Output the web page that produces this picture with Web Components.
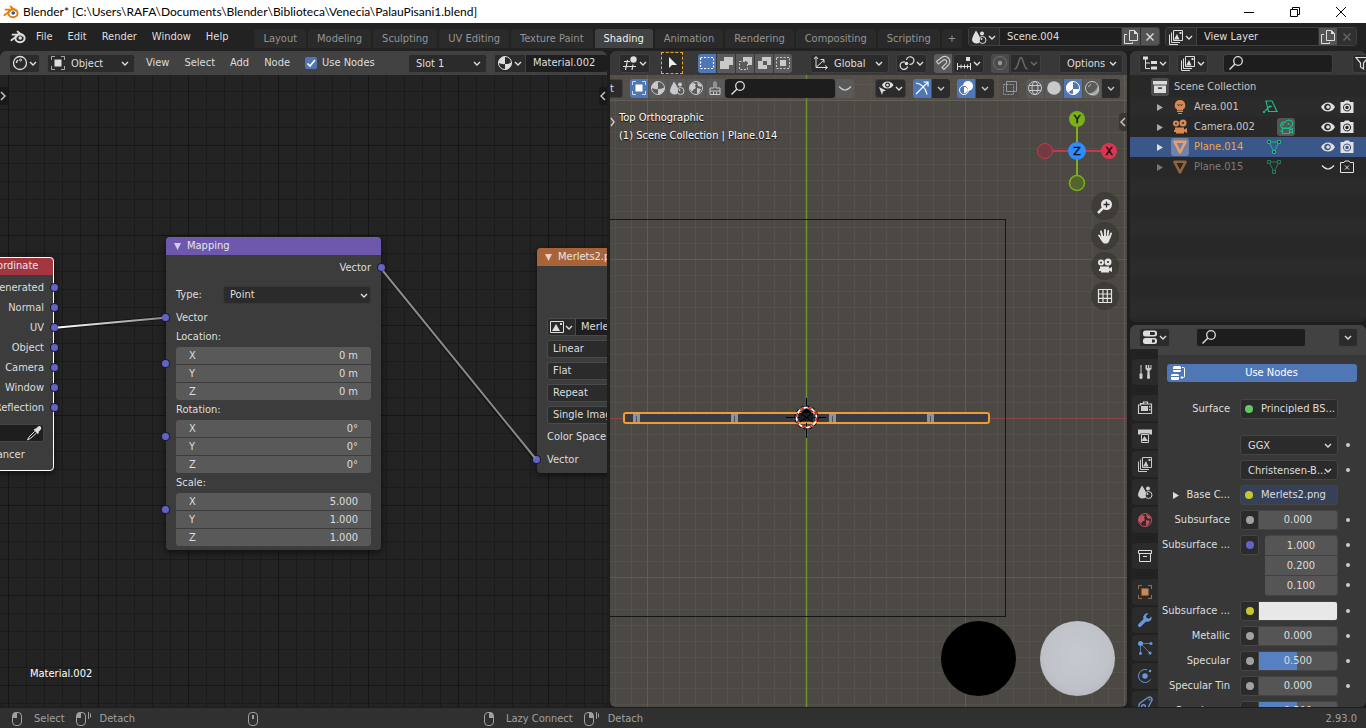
<!DOCTYPE html>
<html lang="en">
<head>
<meta charset="utf-8">
<title>Blender* PalauPisani1.blend</title>
<style>
    * {
        box-sizing: border-box;
    }

    body {
        margin: 0;
        height: 100vh;
        display: flex;
        flex-direction: column;
        overflow: hidden;
        background: #1e1e1e;
        color: #dedede;
        font: 11px/18px "DejaVu Sans Condensed", "DejaVu Sans", sans-serif;
        --field: #2b2b2b;
        --line: #404040;
        --blue: #5077b5;
    }

    main {
        flex: 1;
        min-height: 0;
        display: grid;
        grid-template-columns: minmax(0, 607fr) minmax(0, 517fr) minmax(0, 236fr);
        grid-template-rows: minmax(0, 1fr);
        gap: 3px;
        padding-bottom: 1px;
    }

    .side {
        display: grid;
        grid-template-rows: minmax(0, 271fr) minmax(0, 382fr);
        gap: 3px;
        min-height: 0;
    }

    .left { margin-right: auto; }
    .m4 { margin-left: 4px; }
    .m8 { margin-left: 8px; }
    .m11 { margin-left: 11px; }
</style>
</head>
<body>

<bl-titlebar>Blender* [C:\Users\RAFA\Documents\Blender\Biblioteca\Venecia\PalauPisani1.blend]</bl-titlebar>

<bl-topbar>
    <bl-menu slot="menu">File</bl-menu>
    <bl-menu slot="menu">Edit</bl-menu>
    <bl-menu slot="menu">Render</bl-menu>
    <bl-menu slot="menu">Window</bl-menu>
    <bl-menu slot="menu">Help</bl-menu>
    <bl-tab>Layout</bl-tab>
    <bl-tab>Modeling</bl-tab>
    <bl-tab>Sculpting</bl-tab>
    <bl-tab>UV Editing</bl-tab>
    <bl-tab>Texture Paint</bl-tab>
    <bl-tab active>Shading</bl-tab>
    <bl-tab>Animation</bl-tab>
    <bl-tab>Rendering</bl-tab>
    <bl-tab>Compositing</bl-tab>
    <bl-tab>Scripting</bl-tab>
    <bl-tab narrow>+</bl-tab>
    <bl-datablock slot="data" icon="scene" value="Scene.004" label="Scene"></bl-datablock>
    <bl-datablock slot="data" icon="layers" value="View Layer" label="View layer" last></bl-datablock>
</bl-topbar>

<main>
    <bl-area style="--head: #424242">
        <bl-drop slot="header" icon="shader" label="Editor type"></bl-drop>
        <bl-select slot="header" icon="object" value="Object" label="Shader type" style="width: 88px"></bl-select>
        <bl-menu slot="header" class="m4">View</bl-menu>
        <bl-menu slot="header" class="m8">Select</bl-menu>
        <bl-menu slot="header" class="m8">Add</bl-menu>
        <bl-menu slot="header" class="m8">Node</bl-menu>
        <bl-check slot="header" class="m8 left">Use Nodes</bl-check>
        <bl-select slot="header" value="Slot 1" label="Slot" style="width: 79px"></bl-select>
        <bl-datablock slot="header" icon="material" value="Material.002" label="Material" plain style="width: 114px; margin-right: -9px"></bl-datablock>
        <bl-node-canvas>
            <bl-node heading="Texture Coordinate" color="#a3363f" selected style="left: -76px; top: 182px; width: 130px">
                <bl-socket out>Generated</bl-socket>
                <bl-socket out>Normal</bl-socket>
                <bl-socket out>UV</bl-socket>
                <bl-socket out>Object</bl-socket>
                <bl-socket out>Camera</bl-socket>
                <bl-socket out>Window</bl-socket>
                <bl-socket out>Reflection</bl-socket>
                <bl-picker></bl-picker>
                <bl-option>From Instancer</bl-option>
            </bl-node>
            <bl-node heading="Mapping" color="#6e58ad" style="left: 166px; top: 162px; width: 215px">
                <bl-socket out>Vector</bl-socket>
                <bl-labeled-select label="Type:" value="Point"></bl-labeled-select>
                <bl-socket>Vector</bl-socket>
                <bl-vector label="Location:" values="0 m,0 m,0 m"></bl-vector>
                <bl-vector label="Rotation:" values="0°,0°,0°"></bl-vector>
                <bl-vector label="Scale:" values="5.000,1.000,1.000"></bl-vector>
            </bl-node>
            <bl-node heading="Merlets2.png" color="#a86438" style="left: 537px; top: 173px; width: 215px">
                <bl-image-stack></bl-image-stack>
                <bl-socket>Vector</bl-socket>
            </bl-node>
        </bl-node-canvas>
    </bl-area>

    <bl-area style="--head: #383838">
        <bl-drop slot="header" icon="view3d" label="Editor type"></bl-drop>
        <bl-tool slot="header" icon="cursor" label="Tweak" marked class="m4"></bl-tool>
        <bl-group slot="header" class="m8">
            <bl-tool icon="selnew" label="Set selection" active></bl-tool>
            <bl-tool icon="selext" label="Extend selection"></bl-tool>
            <bl-tool icon="selsub" label="Subtract selection"></bl-tool>
            <bl-tool icon="selinv" label="Invert selection"></bl-tool>
            <bl-tool icon="selint" label="Intersect selection"></bl-tool>
        </bl-group>
        <bl-select slot="header" icon="axes" value="Global" label="Orientation" class="m11" style="width: 79px"></bl-select>
        <bl-drop slot="header" icon="pivot" label="Pivot point"></bl-drop>
        <bl-group slot="header">
            <bl-tool icon="magnet" label="Snap"></bl-tool>
            <bl-drop icon="increment" label="Snap to"></bl-drop>
        </bl-group>
        <bl-group slot="header">
            <bl-tool icon="dot" label="Proportional editing" dim></bl-tool>
            <bl-drop icon="falloff" label="Falloff" dim></bl-drop>
        </bl-group>
        <bl-select slot="header" value="Options" label="Options" class="m11" style="width: 64px"></bl-select>
        <bl-viewport></bl-viewport>
    </bl-area>

    <div class="side">
        <bl-area style="--head: #383838">
            <bl-drop slot="header" icon="outliner" label="Editor type"></bl-drop>
            <bl-drop slot="header" icon="layers" label="Display mode"></bl-drop>
            <bl-search slot="header" class="m8 left"></bl-search>
            <bl-tool slot="header" icon="filter" label="Filter" dark style="margin-right: -14px"></bl-tool>
            <bl-outliner></bl-outliner>
        </bl-area>
        <bl-area style="--head: #424242">
            <bl-drop slot="header" icon="props" label="Editor type"></bl-drop>
            <bl-search slot="header" style="margin: 0 auto 0 19px"></bl-search>
            <bl-tool slot="header" icon="chevron" label="Options" dark></bl-tool>
            <bl-properties></bl-properties>
        </bl-area>
    </div>
</main>

<bl-statusbar></bl-statusbar>

<script type="module">
    // 16 x 16 glyphs, drawn with the current text colour
    const LINE = 'fill="none" stroke="currentColor"';
    const ICONS = {
        chevron: `<path ${LINE} stroke-width="1.4" d="M5 7l3 3 3-3"/>`,
        blender: `<path ${LINE} stroke-width="1.700" stroke-linecap="round" stroke-linejoin="round" d="M7.500 2.500L13 6.800M2.500 5.700h7M1.300 11.300L7 7"/><ellipse ${LINE} cx="10" cy="9.200" rx="4.600" ry="4" stroke-width="2"/><circle cx="10.200" cy="9" r="1.800" fill="var(--eye, currentColor)"/>`,
        shader: `<circle ${LINE} cx="8" cy="8" r="6.500" stroke-width="1.300"/><path ${LINE} d="M4.500 8A3.500 3.500 0 0 1 6 5" stroke-width="1.500"/><circle ${LINE} cx="8.500" cy="5" r="1"/>`,
        object: `<path fill="currentColor" d="M4.500 4.500h7v7h-7z"/><path ${LINE} opacity=".7" d="M1.500 5V1.500H5M11 1.500h3.500V5M14.500 11v3.500H11M5 14.500H1.500V11"/>`,
        material: `<circle ${LINE} cx="8" cy="8" r="6.500"/><path fill="currentColor" d="M8 1.500A6.500 6.500 0 0 0 1.500 8Q5 9.500 8 9zM8 9q3.500 0 6.500-1.500A6.500 6.500 0 0 1 8 14.500z"/>`,
        view3d: `<path ${LINE} stroke-width="1.200" d="M2 6.500h6M1 11.500h13M5.500 5l-2 10M11 9.500l-1 5.500"/><circle fill="currentColor" cx="11.500" cy="4.500" r="3.200"/>`,
        cursor: `<path fill="currentColor" d="M5 2v11l3-3h5z"/>`,
        selnew: `<path ${LINE} stroke-dasharray="2 1.500" stroke-width="1.200" d="M1.500 2.500h13v11h-13z"/>`,
        selext: `<path fill="currentColor" d="M6 2h9v8h-4v4H2V6h4z"/>`,
        selsub: `<path fill="currentColor" d="M6 2h9v8h-4V6H6z"/><path ${LINE} stroke-dasharray="2 1.500" d="M2.500 6.500h8v8h-8z"/>`,
        selinv: `<path fill="currentColor" fill-rule="evenodd" d="M6 2h9v8h-4v4H2V6h4zm1 4v4h4V6z"/>`,
        selint: `<path fill="currentColor" d="M5 5h6v6H5z"/><path ${LINE} stroke-dasharray="2 1.500" d="M1.500 2.500h13v11h-13z"/>`,
        axes: `<path ${LINE} d="M3 2v10.500h11M1 4l2-2.500L5 4M12 10.500l2.500 2-2.500 2M3 12.500L11 5M7.500 4.500H11V8"/>`,
        pivot: `<path ${LINE} stroke-width="1.200" d="M6 7a3.800 3.800 0 1 0 2.600 4.500M7.400 4.800A3.800 3.800 0 1 1 10.500 9.300"/><circle fill="currentColor" cx="7.500" cy="8.500" r="1.800"/>`,
        magnet: `<path ${LINE} stroke-width="1.200" d="M1.500 6.500L6 3a5 5 0 0 1 7.500 7L9 14.500l-2-2 4.300-4.300a2.200 2.200 0 0 0-3.200-3L3.500 9z"/>`,
        increment: `<path ${LINE} d="M1 11.500h14M1.500 8v7M5 9.500v4M8.500 9.500v4M11.500 9.500v4M14.500 8v7"/><path fill="currentColor" d="M10 2h4v4h-4z"/>`,
        dot: `<circle fill="currentColor" cx="8" cy="8" r="2.200"/><circle ${LINE} cx="8" cy="8" r="6.500" opacity=".5"/>`,
        falloff: `<path ${LINE} stroke-width="1.400" d="M1.500 14c4 0 4-11.500 6.500-11.500S10.500 14 14.500 14"/>`,
        search: `<circle ${LINE} cx="10" cy="6" r="4.300" stroke-width="1.300"/><path ${LINE} stroke-width="1.500" d="M7 9l-5.500 5.500"/>`,
        scene: `<path fill="currentColor" d="M5 1.500q4.500 6.500 4 8.500a4 4 0 0 0-.7 4Q2 15.500 1 11 .9 8.500 5 1.500z"/><circle ${LINE} cx="11.500" cy="11" r="3.500"/><path fill="currentColor" d="M9 4.500a2 2 0 1 1 4 0 2 2 0 0 1-4 0z"/><circle cx="10.500" cy="10" r="1" fill="currentColor"/>`,
        world: `<circle ${LINE} cx="8" cy="8" r="6.500"/><path fill="currentColor" d="M2 5l3-2 3 1-1 2 1 2-3 2-1 2-2-3zM9 2l5 3-1 2-3-1zM9 8l4 1-2 4-2 1z"/>`,
        brush: `<path ${LINE} d="M7 8V2.500q1-2 2 0V8h4v3H3V8zM3 11v3.500h10V11M6.500 14v-2M9.500 14v-2"/>`,
        copy: `<path ${LINE} d="M6.500 1.500h5l3 3v7h-8z"/><path fill="currentColor" d="M11 1v4h4z"/><path ${LINE} d="M4 5.500H1.500v9h8V13"/>`,
        close: `<path ${LINE} stroke-width="1.400" d="M4.500 4.500l7 7M11.500 4.500l-7 7"/>`,
        layers: `<path ${LINE} d="M5.500 1.500h9v10h-9zM3.500 3.500v10H12M1.500 5.500v10H10"/><path fill="currentColor" d="M6 10.500L9 5l2.500 5.500zM11.500 3h2v2h-2z"/>`,
        outliner: `<path fill="currentColor" d="M1 1.500h5v3H1zM9 6h6v3H9zM9 11.500h6v3H9z"/><path ${LINE} d="M3.500 4v9.500H8M3.500 8H8"/>`,
        filter: `<path ${LINE} stroke-width="1.200" d="M2 2.500h12L9.500 8v6l-3-2V8z"/>`,
        props: `<rect fill="currentColor" x="1" y="1.500" width="14" height="6" rx="2.500"/><rect fill="currentColor" x="1" y="9" width="14" height="6" rx="2.500"/><path fill="#2b2b2b" d="M8 3h4.500q1 1.500 0 3H8zM10 10.500h2.500q1 1.500 0 3H10z"/>`,
        archive: `<path fill="currentColor" fill-rule="evenodd" d="M1 2h14v3.500H1zM2 6.500h12V14H2zm4 1.800v1.700h4V8.300z"/>`,
        box: `<path ${LINE} d="M1.500 2.500h13v3h-13zM2.500 5.500h11v8h-11zM6 8.500h4"/>`,
        light: `<path fill="currentColor" d="M8 1a5.200 5.200 0 0 1 3 9.500v1H5v-1A5.200 5.200 0 0 1 8 1z"/><path stroke="currentColor" d="M5 12.500h6M6 14.500h4"/><path stroke="#2b2b2b" fill="none" d="M5.500 5.500l1.500 1 1-1 1 1 1.500-1"/>`,
        lightdata: `<path ${LINE} d="M4 2h6l5 10.500H6.500zM3 12l5-5" stroke-width="1.200"/><path fill="currentColor" d="M7.500 9V6l3 1.500zM1 14h2v-2H1z"/>`,
        camera: `<circle cx="4" cy="4.500" r="3" fill="currentColor"/><circle cx="11" cy="4" r="3.500" fill="currentColor"/><path fill="currentColor" d="M3 8.500h9v2l3-1.500v5l-3-1.500v2H4V13H2v-2h1z"/><circle cx="4" cy="4.500" r="1" fill="#2b2b2b"/><circle cx="11" cy="4" r="1" fill="#2b2b2b"/>`,
        cameradata: `<path ${LINE} stroke-width="1.200" d="M4.500 9A3 3 0 1 1 7 3.500 4 3.500 0 1 1 13 7.500L12 9zM4.500 9.500h7v5h-7zM11.500 11l3-1.500v4.500l-3-1.500M4.500 12h-3"/><circle cx="5" cy="5.500" r="1" fill="currentColor"/><circle cx="10.500" cy="5" r="1" fill="currentColor"/>`,
        mesh: `<path ${LINE} stroke-width="2.600" stroke-linejoin="round" d="M2.500 2.800h11L8 13.500z"/>`,
        meshdata: `<path ${LINE} d="M3 3h10L8 13z"/><path fill="#2b2b2b" stroke="currentColor" d="M1.500 1.500h3v3h-3zM11.500 1.500h3v3h-3zM6.500 11.500h3v3h-3z"/>`,
        eye: `<path fill="currentColor" fill-rule="evenodd" d="M8 3.500q4.500 0 7 4.500-2.500 4.500-7 4.500T1 8q2.500-4.500 7-4.500zM8 4.800A3.300 3.300 0 1 0 8 11.300 3.300 3.300 0 0 0 8 4.800z"/><circle cx="8" cy="8" r="1.800" fill="currentColor"/>`,
        shut: `<path ${LINE} stroke-width="1.200" d="M2 6.500q6 7 12 0"/>`,
        photo: `<path fill="currentColor" fill-rule="evenodd" d="M5 3l1-1.500h4L11 3h3.500v11h-13V3zM8 4.500a4 4 0 1 0 .1 0z"/><circle ${LINE} cx="8" cy="8.500" r="2.400" stroke-width="1.300"/>`,
        photoff: `<path ${LINE} d="M5 3.500L6 2h4l1 1.500h3.500v10h-13v-10zM6 6.500l4 4M10 6.500l-4 4"/>`,
        eyecursor: `<path fill="currentColor" fill-rule="evenodd" d="M9.500 1.500q4 0 6 3.500-2 3.500-6 3.500T4 5q1.500-3.500 5.500-3.500zm0 1a2.500 2.500 0 1 0 .1 0zM1 7l7 3.500-3 1-1 3.500z"/><circle cx="9.500" cy="5" r="1.300" fill="currentColor"/>`,
        gizmo: `<path ${LINE} stroke-width="1.200" d="M2 14L13.500 2.500M9.500 2h4.500v4.500M2 3q9 1.500 11 11.500"/>`,
        overlay: `<circle cx="10" cy="6" r="5" fill="currentColor"/><circle cx="6" cy="10" r="4.500" fill="var(--blue)" stroke="currentColor"/><path fill="currentColor" d="M6 7a4 4 0 0 1 4 3 4 4 0 0 1-4 3z"/>`,
        xray: `<path ${LINE} d="M4.500 1.500h10v10h-10z"/><path ${LINE} d="M1.500 4.500h10v10h-10z" stroke-dasharray="2 1"/>`,
        wire: `<circle ${LINE} cx="8" cy="8" r="6.500"/><ellipse ${LINE} cx="8" cy="8" rx="3" ry="6.500"/><path ${LINE} d="M2 5.500h12M2 10.500h12"/>`,
        solid: `<circle cx="8" cy="8" r="6.800" fill="currentColor"/>`,
        matprev: `<circle ${LINE} cx="8" cy="8" r="6.500"/><path fill="currentColor" d="M8 1.500A6.500 6.500 0 0 0 3 12.500L8 9zM8 9h6.500A6.500 6.500 0 0 1 8 14.500z"/>`,
        rendered: `<circle ${LINE} cx="8" cy="8" r="6.500"/><path ${LINE} d="M4.500 7A4 4 0 0 1 7 4.500"/><path fill="currentColor" opacity=".6" d="M14 6a6 6 0 0 1-9.500 7.500Q11 13 14 6z"/>`,
        image: `<path ${LINE} d="M1.500 2.500h13v11h-13z"/><path fill="currentColor" d="M3 12l4-7 4 7zM11 4h2v2h-2z"/>`,
        zoomin: `<circle cx="9.500" cy="6.500" r="5.500" fill="currentColor"/><path ${LINE} stroke-width="2.500" d="M6 10l-5 5"/><path stroke="#2b2b2b" stroke-width="1.300" d="M6.500 6.500h6M9.500 3.500v6"/>`,
        hand: `<path ${LINE} stroke-width="1.900" stroke-linecap="round" d="M5.500 9L4 3.500M8 8V2M10.500 9l.7-6M12.500 10L14 5.500M5 11L2 7.500"/><path fill="currentColor" d="M4.500 8h8.500q0 6-3 7.500H7q-2-1.500-4-5z"/>`,
        grid: `<path ${LINE} stroke-width="1.200" d="M1.500 1.500h13v13h-13zM6 1.500v13M10.300 1.500v13M1.500 6h13M1.500 10.300h13"/>`,
        tools: `<path ${LINE} d="M4 1v8"/><rect x="2.500" y="9" width="3" height="6" rx="1.500" fill="currentColor"/><path fill="currentColor" d="M8.500 1v4l2 2-.5 7q1.500 2 3 0L12.500 7l2-2V1h-1v3h-1.200V1h-1.500v3H10V1z"/>`,
        render: `<path ${LINE} stroke-width="1.200" d="M3.500 4h11v9.500h-13V5H3.500V3.500h3V2h4v2"/><path fill="currentColor" d="M4 6h7v5H4zM12 6h1.500v1.500H12zM12 9h1.500v1.500H12z"/>`,
        output: `<path fill="currentColor" d="M1 1.500h14v5h-2.500v-1h-9v1H1z"/><path ${LINE} d="M4.500 6.500h7v8h-7z"/><path fill="currentColor" d="M5 12l2.500-4L11 13H5z"/>`,
        wrench: `<path fill="currentColor" d="M14.500 4.500L12 6.800 9.500 6 9 3.800 11.500 1.500A4.200 4.200 0 0 0 6.500 7L1.500 12a1.700 1.700 0 0 0 2.500 2.500l5-5a4.200 4.200 0 0 0 5.500-5z"/>`,
        particles: `<path ${LINE} d="M3.500 3.500L13 13M3.500 3.500H14M3.500 3.500V13" opacity=".7"/><circle cx="3.500" cy="3.500" r="2.500" fill="currentColor"/><circle cx="14" cy="3.500" r="1.500" fill="currentColor"/><circle cx="13" cy="13" r="1.600" fill="currentColor"/><circle cx="3.500" cy="13.500" r="1.400" fill="currentColor"/>`,
        physics: `<path ${LINE} d="M10 1.800A6.500 6.500 0 1 0 13.500 11.500"/><circle cx="8" cy="8" r="2.700" fill="currentColor"/><circle cx="13" cy="3" r="1.300" fill="currentColor"/>`,
        constraint: `<path ${LINE} stroke-width="1.300" d="M3 7l8-5.500a2.500 2.500 0 0 1 3.500 3.500L10.500 13A4.500 4.500 0 1 1 3 7z"/><circle ${LINE} cx="6.500" cy="10.500" r="1.800" stroke-width="1.500"/><circle cx="12.500" cy="3.500" r="1" fill="currentColor"/>`,
        nodes: `<rect fill="currentColor" x="3" y="1" width="8" height="6" rx="1.500"/><rect fill="currentColor" x="1" y="9" width="8" height="6" rx="1.500"/><path stroke="var(--blue)" d="M3 4.500h8M1 11.500h8"/><path ${LINE} d="M12 2.500h1.500q1 0 1 1v8q0 1-1 1H11M12.500 11L11 12.500l1.500 1.500"/>`,
        dropper: `<path fill="currentColor" d="M10 3.500l2-2q2-1 3 .5t-.5 3l-2 2 .5 1-1.300 1-4-4 1-1.300z"/><path ${LINE} d="M8.500 6.500L3 12l-1.500 3L5 13l5.500-5"/>`
    };

    const glyph = (name) => `<svg width="16" height="16" viewBox="0 0 16 16" aria-hidden="true">${ICONS[name]}</svg>`;

    const RESET = `
        *, *::before, *::after { box-sizing: border-box; }
        :host { display: block; }
        svg { display: block; flex: none; }
        button, input, select {
            margin: 0; padding: 0; border: 0; background: none;
            color: inherit; font: inherit; min-width: 0; appearance: none; border-radius: 0;
        }
    `;

    // every element renders once, from its attributes
    function define(name, css, markup) {
        customElements.define(name, class extends HTMLElement {
            constructor() {
                super();
                this.attachShadow({ mode: "open" });
            }

            connectedCallback() {
                const attr = (key) => this.getAttribute(key) ?? "";
                this.shadowRoot.innerHTML = `<style>${RESET}${css}</style>${markup(attr, this)}`;
            }
        });
    }

    /* small controls */

    define("bl-menu", `
        button { height: 18px; white-space: nowrap; }
    `, () => `<button type="button"><slot></slot></button>`);

    define("bl-tab", `
        button {
            height: 19px; padding: 0 9px; white-space: nowrap;
            background: #2a2a2a; color: #949494; border-radius: 3px 3px 0 0;
        }
        :host([active]) button { background: #424242; color: #f0f0f0; }
        :host([narrow]) button { padding: 0 6px; }
    `, () => `<button type="button"><slot></slot></button>`);

    define("bl-drop", `
        :host { flex: none; }
        button {
            display: flex; align-items: center; width: 31px; height: 19px; padding-left: 2px;
            background: var(--field); border: 1px solid var(--line); border-radius: 3px;
        }
        svg + svg { margin-left: -3px; }
        :host([dim]) { color: #6c6c6c; }
    `, (attr) => `<button type="button" aria-label="${attr("label")}">${glyph(attr("icon"))}${glyph("chevron")}</button>`);

    define("bl-tool", `
        :host { flex: none; }
        button {
            display: grid; place-items: center; width: 18px; height: 19px;
            background: #5a5a5a; color: #c9c9c9; border-radius: inherit;
        }
        :host([active]) button { background: var(--blue); color: #fff; }
        :host([dim]) button { color: #999; background: #4b4b4b; }
        :host([dark]) button { background: var(--field); border: 1px solid var(--line); border-radius: 3px; width: 20px; color: #ddd; }
        :host([flat]) button { background: var(--field); }
        :host([marked]) button { width: 22px; height: 22px; background: var(--field); border: 1px dashed #f0a52c; color: #eee; }
    `, (attr) => `<button type="button" aria-label="${attr("label")}">${glyph(attr("icon"))}</button>`);

    define("bl-group", `
        :host { display: flex; gap: 1px; flex: none; border-radius: 3px; overflow: hidden; }
    `, () => `<slot></slot>`);

    define("bl-select", `
        :host { flex: none; height: 19px; background: var(--field); border: 1px solid var(--line); border-radius: 3px; }
        .box { display: grid; align-items: center; grid-template-columns: auto minmax(0, 1fr) 16px; height: 100%; padding: 0 1px 0 2px; }
        .box > * { grid-row: 1; }
        .icon { grid-column: 1; }
        select { grid-column: 2 / 4; padding-left: 5px; height: 17px; line-height: 17px; overflow: hidden; }
        .arrow { grid-column: 3; pointer-events: none; }
    `, (attr) => `
        <div class="box">
            <span class="icon">${attr("icon") ? glyph(attr("icon")) : ""}</span>
            <select aria-label="${attr("label")}"><option>${attr("value")}</option></select>
            <span class="arrow">${glyph("chevron")}</span>
        </div>`);

    define("bl-check", `
        label { display: flex; align-items: center; gap: 5px; white-space: nowrap; }
        .tick { display: grid; }
        .tick > * { grid-area: 1 / 1; }
        input { width: 12px; height: 12px; background: var(--blue); border-radius: 2px; }
        svg { pointer-events: none; }
    `, () => `
        <label>
            <span class="tick"><input type="checkbox" checked><svg width="12" height="12" viewBox="0 0 12 12"><path fill="none" stroke="#fff" stroke-width="1.600" d="M2.500 6.500L5 9l5-6"/></svg></span>
            <slot></slot>
        </label>`);

    define("bl-datablock", `
        :host { flex: none; width: 192px; }
        .box { display: flex; height: 19px; border: 1px solid var(--line); border-radius: 3px; overflow: hidden; background: #1e1e1e; }
        .pick { display: flex; align-items: center; width: 31px; flex: none; padding-left: 2px; background: var(--field); border-right: 1px solid var(--line); }
        .pick svg + svg { margin-left: -3px; }
        input { flex: 1; height: 17px; padding-left: 7px; }
        .act { width: 19px; display: grid; place-items: center; flex: none; background: #545454; border-left: 1px solid #303030; }
        :host([last]) .act:last-child { background: #303030; color: #666; }
    `, (attr, el) => `
        <div class="box">
            <button type="button" class="pick" aria-label="Browse ${attr("label")}">${glyph(attr("icon"))}${glyph("chevron")}</button>
            <input type="text" aria-label="${attr("label")}" value="${attr("value")}">
            ${el.hasAttribute("plain") ? "" : `
            <button type="button" class="act" aria-label="New">${glyph("copy")}</button>
            <button type="button" class="act" aria-label="Remove">${glyph("close")}</button>`}
        </div>`);

    define("bl-search", `
        :host { flex: none; width: 110px; }
        label { display: flex; align-items: center; height: 19px; padding-left: 4px; background: #1d1d1d; border: 1px solid var(--line); border-radius: 3px; }
        input { flex: 1; height: 17px; }
    `, () => `<label>${glyph("search")}<input type="text" aria-label="Search"></label>`);

    /* window frame */

    define("bl-titlebar", `
        :host { display: flex; align-items: center; flex: none; height: 23px; padding-left: 3px; background: #fff; color: #000; font: 12px Lato, "Open Sans", sans-serif; }
        .mark { color: #e87d0d; margin-right: 4px; --eye: #265787; }
        .title { flex: 1; white-space: nowrap; }
        button { width: 46px; height: 23px; padding-right: 4px; display: grid; place-items: center; }
    `, () => `
        <span class="mark">${glyph("blender")}</span>
        <span class="title"><slot></slot></span>
        <button type="button" aria-label="Minimize"><svg width="10" height="10"><path stroke="#000" d="M0 5.500h10"/></svg></button>
        <button type="button" aria-label="Restore"><svg width="10" height="10"><path fill="none" stroke="#000" d="M.5 2.500h7v7h-7zM2.500 2.500v-2h7v7h-2"/></svg></button>
        <button type="button" aria-label="Close"><svg width="10" height="10"><path stroke="#000" d="M0 0l10 10M10 0L0 10"/></svg></button>`);

    define("bl-topbar", `
        :host { display: flex; flex: none; height: 28px; padding: 4px 9px 0 10px; background: #222; }
        .menus { display: flex; gap: 15px; height: 20px; align-items: center; flex: none; }
        .menus svg { margin-right: -5px; }
        nav { display: flex; gap: 2px; margin: 2px auto 0 26px; }
        .data { display: flex; gap: 5px; flex: none; }
    `, () => `
        <div class="menus">${glyph("blender")}<slot name="menu"></slot></div>
        <nav><slot></slot></nav>
        <div class="data"><slot name="data"></slot></div>`);

    define("bl-area", `
        :host { display: flex; flex-direction: column; min-width: 0; min-height: 0; border-radius: 6px; overflow: hidden; background: #282828; }
        header { display: flex; align-items: center; gap: 7px; flex: none; height: 24px; padding: 0 8px 0 9px; background: var(--head); }
        .body { flex: 1; min-height: 0; display: grid; grid-template-rows: minmax(0, 1fr); }
    `, () => `
        <header><slot name="header"></slot></header>
        <div class="body"><slot></slot></div>`);

    /* node editor */

    define("bl-node-canvas", `
        :host {
            position: relative; overflow: hidden;
            background:
                linear-gradient(90deg, #151515 1px, transparent 1px) 8px 0 / 90px 90px,
                linear-gradient(#151515 1px, transparent 1px) 0 70px / 90px 90px,
                linear-gradient(90deg, #1b1b1b 1px, transparent 1px) 8px 0 / 18px 18px,
                linear-gradient(#1b1b1b 1px, transparent 1px) 0 16px / 18px 18px,
                #232323;
        }
        .links { position: absolute; left: 0; top: 0; z-index: 1; pointer-events: none; }
        .name { position: absolute; left: 30px; bottom: 24px; color: #fff; }
        .edge { position: absolute; top: 12px; width: 8px; height: 18px; background: #191919; color: #ccc; }
        .edge svg { width: 8px; height: 18px; }
        .edge.l { left: 0; }
        .edge.r { right: 0; }
    `, () => `
        <slot></slot>
        <svg class="links" width="607" height="632">
            <defs>
                <linearGradient id="a"><stop offset="0" stop-color="#fff"/><stop offset="1" stop-color="#8b8b8b"/></linearGradient>
            </defs>
            <g fill="none">
                <path stroke="#151515" stroke-width="4" d="M59 252.500L161 243M384 197l149 185"/>
                <path stroke="url(#a)" stroke-width="2" d="M58 252.500L162 243"/>
                <path stroke="#8b8b8b" stroke-width="2" d="M383 196l152 187"/>
            </g>
        </svg>
        <button type="button" class="edge l" aria-label="Show toolbar"><svg viewBox="0 0 8 18"><path fill="none" stroke="currentColor" stroke-width="1.400" d="M1 5l4 4-4 4"/></svg></button>
        <button type="button" class="edge r" aria-label="Show sidebar"><svg viewBox="0 0 8 18"><path fill="none" stroke="currentColor" stroke-width="1.400" d="M6 5L2 9l4 4"/></svg></button>
        <span class="name">Material.002</span>`);

    define("bl-node", `
        :host { position: absolute; background: #3e3e3ef2; border-radius: 4px; box-shadow: 0 2px 7px #0009; z-index: 0; }
        :host([selected]) { outline: 1px solid #fff; outline-offset: -1px; }
        .head { display: flex; align-items: center; gap: 6px; height: 18px; padding-left: 8px; border-radius: 4px 4px 0 0; color: #e6e6e6; white-space: nowrap; }
        .body { padding: 3px 10px 4px; }
        svg { opacity: .7; }
    `, (attr) => `
        <div class="head" style="background: ${attr("color")}">
            <svg width="7" height="7"><path fill="#fff" d="M0 0h7L3.500 7z"/></svg>
            <span>${attr("heading")}</span>
        </div>
        <div class="body"><slot></slot></div>`);

    const DOT = `
        .dot { position: absolute; left: -14px; top: calc(50% - 4px); width: 7px; height: 7px; border-radius: 50%; background: #6363c7; box-shadow: 0 0 0 1px #1b1b2b; }
    `;

    define("bl-socket", `${DOT}
        :host { position: relative; height: 19px; line-height: 19px; }
        :host([out]) { text-align: right; height: 20px; line-height: 20px; }
        :host([out]) .dot { left: auto; right: -14px; }
    `, () => `<span class="dot"></span><slot></slot>`);

    define("bl-option", `
        label { display: flex; align-items: center; gap: 5px; height: 25px; white-space: nowrap; }
        input { width: 12px; height: 12px; background: #595959; border-radius: 2px; flex: none; }
    `, () => `<label><input type="checkbox"><slot></slot></label>`);

    define("bl-picker", `
        :host { margin-top: 6px; }
        label { display: flex; justify-content: flex-end; height: 18px; align-items: center; padding-right: 1px; background: #1e1e1e; border: 1px solid #454545; border-radius: 3px; }
        input { flex: 1; height: 16px; }
    `, () => `<label><input type="text" aria-label="Object">${glyph("dropper")}</label>`);

    define("bl-labeled-select", `
        :host { display: grid; grid-template-columns: 47px minmax(0, 1fr); padding: 8px 0 4px; }
        .field { display: grid; align-items: center; grid-template-columns: minmax(0, 1fr) 14px; background: #2b2b2b; border: 1px solid #383838; border-radius: 3px; }
        select { grid-area: 1 / 1 / 2 / 3; height: 16px; line-height: 16px; padding-left: 6px; }
        svg { grid-area: 1 / 2; pointer-events: none; }
    `, (attr) => `
        <label for="s">${attr("label")}</label>
        <span class="field"><select id="s"><option>${attr("value")}</option></select>${glyph("chevron")}</span>`);

    define("bl-vector", `${DOT}
        :host { position: relative; }
        .name { height: 20px; line-height: 20px; }
        .set { display: grid; gap: 1px; border-radius: 3px; overflow: hidden; }
        .set label { display: flex; height: 17px; line-height: 17px; padding: 0 13px; background: #595959; }
        input { flex: 1; height: 17px; text-align: right; }
    `, (attr) => `
        <span class="dot"></span>
        <div class="name">${attr("label")}</div>
        <div class="set">${attr("values").split(",").map((value, i) => `<label>${"XYZ"[i]}<input type="text" value="${value}"></label>`).join("")}</div>`);

    define("bl-image-stack", `
        :host { padding: 49px 0 4px; }
        .stack { display: grid; gap: 4px; }
        .stack > * { height: 18px; border: 1px solid #4a4a4a; border-radius: 3px; background: #2b2b2b; }
        select { padding-left: 5px; line-height: 16px; }
        .stack .img { display: flex; }
        .img button { display: flex; align-items: center; width: 28px; padding-left: 1px; border-right: 1px solid #4a4a4a; flex: none; }
        .img svg + svg { margin-left: -4px; }
        .img input { flex: 1; padding-left: 5px; background: #1e1e1e; }
        .stack label { border: 0; background: none; height: 18px; }
    `, () => `
        <div class="stack">
            <div class="img"><button type="button" aria-label="Browse image">${glyph("image")}${glyph("chevron")}</button><input type="text" aria-label="Image" value="Merlets2.png"></div>
            <select aria-label="Interpolation"><option>Linear</option></select>
            <select aria-label="Projection"><option>Flat</option></select>
            <select aria-label="Extension"><option>Repeat</option></select>
            <select aria-label="Source"><option>Single Image</option></select>
            <label>Color Space</label>
        </div>`);

    /* 3D viewport */

    const steps = [16, 32, 48, 64, 80, 95, 111, 127, 143];
    const windows = [23, 121, 219, 317];

    define("bl-viewport", `
        :host { position: relative; overflow: hidden; background: #4c4843; }
        .scene { position: absolute; inset: 0; width: 100%; height: 100%; }
        .bar { position: relative; display: flex; align-items: center; gap: 7px; height: 26px; padding-right: 7px; background: #6a645c40; }
        .bar > .first { background: var(--field); border: 1px solid var(--line); border-left: 0; border-radius: 0 3px 3px 0; width: 13px; height: 19px; overflow: hidden; text-align: left; line-height: 17px; }
        bl-search { --line: #1d1d1d; }
        .auto { margin-left: auto; }
        .info { position: absolute; left: 9px; top: 34px; color: #fff; text-shadow: 0 1px 1px #000; }
        .axes { position: absolute; right: 9px; top: 35px; }
        .nav { position: absolute; right: 8px; top: 117px; display: grid; gap: 2px; }
        .nav button { width: 28px; height: 28px; border-radius: 50%; background: #37343199; display: grid; place-items: center; color: #e4e4e4; }
        .balls { position: absolute; right: 12px; bottom: 11px; display: flex; gap: 24px; }
        .balls span { width: 75px; height: 75px; border-radius: 50%; background: #000; }
        .balls span + span { background: radial-gradient(circle at 50% 45%, #c6c9cf 0, #bfc2c8 60%, #a9acb2 100%); }
        .edge { position: absolute; right: 0; top: 38px; width: 8px; height: 18px; border-radius: 4px 0 0 4px; background: #393633; color: #ccc; }
        .edge.l { right: auto; left: 0; background: none; }
        .edge svg { width: 8px; height: 18px; }
    `, () => `
        <svg class="scene" aria-hidden="true">
            <defs>
                <pattern id="g" x="37" y="25" width="159" height="159" patternUnits="userSpaceOnUse">
                    <path stroke="#54504b" fill="none" d="${steps.map((s) => `M${s}.500 0v159M0 ${s}.500h159`).join("")}"/>
                    <path stroke="#605c57" fill="none" d="M.5 0v159M0 .5h159"/>
                </pattern>
            </defs>
            <rect width="100%" height="100%" fill="url(#g)"/>
            <path stroke="#8e424b" d="M0 343.500h2000"/>
            <path stroke="#6b9328" stroke-width="1.500" d="M196.500 0v2000"/>
            <rect x="-20" y="144.500" width="415.500" height="397" fill="none" stroke="#161616"/>
            <rect x="14" y="338" width="365" height="10" rx="2" fill="#363b46" stroke="#f39b30" stroke-width="2"/>
            ${windows.map((x) => `<path fill="#8d929b" d="M${x} 339h7v8h-7z"/><path fill="#4d525c" d="M${x + 3} 341h1v6h-1z"/>`).join("")}
            <path fill="#000" d="M191 338l5.500-5 5.500 5z"/>
            <rect x="189" y="338" width="14" height="8" fill="#181c24"/>
            <path stroke="#000" d="M176 342.500h14M203 342.500h13M196.500 323v14M196.500 348v15M190 338l13 9M203 338l-13 9"/>
            <circle cx="196.500" cy="342.500" r="11.500" fill="none" stroke="#000" stroke-dasharray="3 3"/>
            <circle cx="196.500" cy="342.500" r="10" fill="none" stroke="#fff" stroke-width="1.500"/>
            <circle cx="196.500" cy="342.500" r="10" fill="none" stroke="#e01818" stroke-width="1.500" stroke-dasharray="4 4"/>
        </svg>
        <div class="bar">
            <button type="button" class="first">t</button>
            <bl-group>
                <bl-tool icon="object" label="Object assets" active></bl-tool>
                <bl-tool icon="material" label="Materials"></bl-tool>
                <bl-tool icon="scene" label="Scenes"></bl-tool>
                <bl-tool icon="world" label="Worlds"></bl-tool>
                <bl-tool icon="brush" label="Brushes"></bl-tool>
                <bl-search></bl-search>
                <bl-tool icon="shut" label="Hidden"></bl-tool>
            </bl-group>
            <bl-drop class="auto" icon="eyecursor" label="Visibility"></bl-drop>
            <bl-group><bl-tool icon="gizmo" label="Gizmos" active></bl-tool><bl-tool icon="chevron" label="Gizmo options" flat></bl-tool></bl-group>
            <bl-group><bl-tool icon="overlay" label="Overlays" active></bl-tool><bl-tool icon="chevron" label="Overlay options" flat></bl-tool></bl-group>
            <bl-group><bl-tool icon="xray" label="X-ray" dim></bl-tool></bl-group>
            <bl-group>
                <bl-tool icon="wire" label="Wireframe"></bl-tool>
                <bl-tool icon="solid" label="Solid"></bl-tool>
                <bl-tool icon="matprev" label="Material preview" active></bl-tool>
                <bl-tool icon="rendered" label="Rendered"></bl-tool>
                <bl-tool icon="chevron" label="Shading options" flat></bl-tool>
            </bl-group>
        </div>
        <div class="info"><div>Top Orthographic</div><div>(1) Scene Collection | Plane.014</div></div>
        <svg class="axes" width="82" height="82" font-family="DejaVu Sans" font-size="11" text-anchor="middle">
            <path stroke="#7bb01a" stroke-width="2" d="M41 9v57"/><path stroke="#c9374f" stroke-width="2" d="M16 41h57"/>
            <circle cx="41" cy="9" r="8" fill="#7bb01a"/><circle cx="73" cy="41" r="8" fill="#d8374f"/>
            <circle cx="9" cy="41" r="7.500" fill="#713b41" stroke="#c9374f"/><circle cx="41" cy="73" r="7.500" fill="#53652d" stroke="#7bb01a" stroke-width="1.500"/>
            <circle cx="41" cy="41" r="9" fill="#2d8cff"/>
            <g fill="#101010" stroke="#101010" stroke-width=".4"><text x="41" y="13">Y</text><text x="73" y="45">X</text><text x="41" y="45">Z</text></g>
        </svg>
        <div class="nav">
            <button type="button" aria-label="Zoom">${glyph("zoomin")}</button>
            <button type="button" aria-label="Pan">${glyph("hand")}</button>
            <button type="button" aria-label="Camera view">${glyph("camera")}</button>
            <button type="button" aria-label="Toggle perspective">${glyph("grid")}</button>
        </div>
        <div class="balls"><span></span><span></span></div>
        <button type="button" class="edge l" aria-label="Show toolbar"><svg viewBox="0 0 8 18"><path fill="none" stroke="currentColor" stroke-width="1.400" d="M1 5l3 4-3 4"/></svg></button>
        <button type="button" class="edge" aria-label="Show sidebar"><svg viewBox="0 0 8 18"><path fill="none" stroke="currentColor" stroke-width="1.400" d="M6 5L2 9l4 4"/></svg></button>`);

    /* outliner */

    define("bl-outliner-row", `
        :host { display: flex; align-items: center; height: 20px; padding: 0 11px 0 27px; color: #c4c4c4; }
        :host([root]) { padding-left: 21px; }
        :host([current]) { background: #3b5689; color: #f3a53a; }
        :host([off]) { color: #7d7d7d; }
        .tri { width: 14px; flex: none; color: #aaa; }
        :host([current]) .tri { color: #ddd; }
        :host([off]) .tri { color: #777; }
        .kind { padding: 1px; border-radius: 3px; color: #d9894f; }
        :host([root]) .kind { color: #ddd; background: #4c4c4c; }
        :host([current]) .kind { background: #6f82a8; color: #e6a070; }
        :host([off]) .kind, :host([off]) .data { opacity: .6; }
        .name { margin: 0 22px 0 5px; white-space: nowrap; }
        .data { color: #1dbb8c; padding: 1px; border-radius: 3px; }
        .data.lit { background: #555; }
        .end { display: flex; gap: 3px; margin-left: auto; color: #e0e0e0; }
    `, (attr, el) => `
        ${el.hasAttribute("root") ? "" : `<span class="tri"><svg width="6" height="7"><path fill="currentColor" d="M0 0l6 3.500L0 7z"/></svg></span>`}
        <span class="kind">${glyph(attr("icon"))}</span>
        <span class="name"><slot></slot></span>
        ${attr("data") ? `<span class="data ${attr("data") === "cameradata" ? "lit" : ""}">${glyph(attr("data"))}</span>
        <span class="end">${el.hasAttribute("off") ? glyph("shut") + glyph("photoff") : glyph("eye") + glyph("photo")}</span>` : ""}`);

    define("bl-outliner", `
        :host { padding-top: 2px; overflow: hidden; background: repeating-linear-gradient(#282828 0 20px, #2b2b2b 20px 40px) 0 2px; }
    `, () => `
        <bl-outliner-row root icon="archive">Scene Collection</bl-outliner-row>
        <bl-outliner-row icon="light" data="lightdata">Area.001</bl-outliner-row>
        <bl-outliner-row icon="camera" data="cameradata">Camera.002</bl-outliner-row>
        <bl-outliner-row current icon="mesh" data="meshdata">Plane.014</bl-outliner-row>
        <bl-outliner-row off icon="mesh" data="meshdata">Plane.015</bl-outliner-row>`);

    /* properties */

    define("bl-prop", `
        :host { display: grid; grid-template-columns: minmax(0, 1fr) 98px 8px; column-gap: 6px; }
        .name { height: 20px; line-height: 20px; padding-right: 4px; white-space: nowrap; display: flex; justify-content: flex-end; align-items: center; }
        .name.open { justify-content: space-between; }
        .name svg { margin-left: 11px; }
        .ctl { display: flex; align-items: flex-start; min-height: 20px; }
        .sock { width: 19px; height: 20px; flex: none; display: grid; place-items: center; background: var(--field); border: 1px solid #454545; border-radius: 3px 0 0 3px; }
        .sock i, .wide i { width: 8px; height: 8px; border-radius: 50%; background: var(--c); display: block; flex: none; }
        .split .sock { border-radius: 3px; margin-right: 6px; }
        .vals { flex: 1; display: grid; gap: 1px; border-radius: 0 3px 3px 0; overflow: hidden; border: 1px solid #454545; border-left: 0; background: #404040; }
        .split .vals { border-radius: 3px; }
        .vals input { width: 100%; height: 18px; text-align: center; background: #555; }
        .split .vals input { height: 19px; }
        .vals input[type=color] { background: #e8e8e8; }
        .vals input[type=color]::-webkit-color-swatch-wrapper { display: none; }
        .half input { background: linear-gradient(90deg, #5680c2 49%, #555 49%); }
        .wide { flex: 1; display: flex; align-items: center; gap: 8px; height: 20px; padding-left: 4px; white-space: nowrap; background: var(--field); border: 1px solid #454545; border-radius: 3px; }
        .wide.lit { background: #364159; }
        bl-select { flex: 1; height: 20px; --line: #454545; }
        .keys { display: grid; grid-auto-rows: 20px; align-items: center; justify-items: center; }
        .keys i { width: 4px; height: 4px; border-radius: 50%; background: #ccc; }
    `, (attr) => {
        const kind = attr("kind");
        const values = attr("values").split(",");
        const sock = `<button type="button" class="sock" aria-label="Socket"><i></i></button>`;
        const controls = {
            button: () => `<button type="button" class="wide ${attr("tone")}"><i></i><span>${values[0]}</span></button>`,
            select: () => `<bl-select label="${attr("hint")}" value="${values[0]}"></bl-select>`,
            color: () => `${sock}<div class="vals"><input id="f" type="color" value="#e8e8e8"></div>`,
            number: () => `${sock}<div class="vals ${attr("tone")}">${values.map((v, i) => `<input ${i ? `aria-label="${attr("label")} ${i + 1}"` : 'id="f"'} type="text" value="${v}">`).join("")}</div>`
        };
        return `
            <label class="name ${attr("open") ? "open" : ""}" for="f">${attr("open") ? `<svg width="6" height="7"><path fill="currentColor" d="M0 0l6 3.500L0 7z"/></svg>` : ""}${attr("label")}</label>
            <div class="ctl ${values.length > 1 ? "split" : ""}" style="--c: ${attr("color")}">${controls[kind]()}</div>
            <div class="keys">${attr("keys") === "no" ? "" : values.map(() => "<i></i>").join("")}</div>`;
    });

    const tabs = [
        [["tools", "#ccc"]],
        [["render", "#ccc"], ["output", "#ccc"], ["layers", "#ccc"], ["scene", "#ccc"], ["world", "#c5525e"]],
        [["box", "#ddd"]],
        [["object", "#cf8750"], ["wrench", "#6a98dc"], ["particles", "#6a98dc"], ["physics", "#6a98dc"], ["constraint", "#6a98dc"]]
    ];

    define("bl-properties", `
        :host { display: grid; grid-template-columns: 28px minmax(0, 1fr); grid-template-rows: minmax(0, 1fr); min-height: 0; background: #383838; }
        nav { display: grid; align-content: start; gap: 10px; padding: 10px 0 0 2px; background: #222; overflow: hidden; }
        nav div { display: grid; gap: 2px; }
        nav button { height: 26px; display: grid; place-items: center; background: #2b2b2b; border-radius: 4px 0 0 4px; }
        .panel { overflow: hidden; border-top: 6px solid #424242; padding: 9px 9px 0 4px; }
        .use { display: grid; grid-template-columns: 16px 1fr; align-items: center; width: calc(100% - 5px); height: 18px; margin: 0 0 17px 5px; padding: 0 0 0 3px; background: var(--blue); color: #fff; border-radius: 3px; }
        .list { display: grid; gap: 5px; margin-right: 5px; }
        .gap { margin-bottom: 11px; }
    `, () => `
        <nav>${tabs.map((group) => `<div>${group.map(([icon, color]) => `<button type="button" aria-label="${icon}" style="color: ${color}">${glyph(icon)}</button>`).join("")}</div>`).join("")}</nav>
        <div class="panel">
            <button type="button" class="use">${glyph("nodes")}<span>Use Nodes</span></button>
            <div class="list">
                <bl-prop class="gap" kind="button" label="Surface" values="Principled BS..." color="#63c763" keys="no"></bl-prop>
                <bl-prop kind="select" hint="Distribution" values="GGX"></bl-prop>
                <bl-prop kind="select" hint="Subsurface method" values="Christensen-B..."></bl-prop>
                <bl-prop kind="button" label="Base C..." open="yes" tone="lit" values="Merlets2.png" color="#c7c729" keys="no"></bl-prop>
                <bl-prop kind="number" label="Subsurface" values="0.000" color="#a1a1a1"></bl-prop>
                <bl-prop kind="number" label="Subsurface ..." values="1.000,0.200,0.100" color="#6363c7"></bl-prop>
                <bl-prop kind="color" label="Subsurface ..." values="" color="#c7c729"></bl-prop>
                <bl-prop kind="number" label="Metallic" values="0.000" color="#a1a1a1"></bl-prop>
                <bl-prop kind="number" label="Specular" tone="half" values="0.500" color="#a1a1a1"></bl-prop>
                <bl-prop kind="number" label="Specular Tin" values="0.000" color="#a1a1a1"></bl-prop>
                <bl-prop kind="number" label="Roughness" tone="half" values="0.500" color="#a1a1a1"></bl-prop>
            </div>
        </div>`);

    /* status bar */

    const mouse = (button, drag) => {
        const fills = {
            left: "M2 2.500q1-1.500 4-1.500v6H2z",
            middle: "M5 4h2v4H5z",
            right: "M10 2.500Q9 1 6 1v6h4z"
        };
        return `<svg width="${drag ? 14 : 12}" height="16" overflow="visible" aria-hidden="true">
            <rect x="1.500" y="1.500" width="9" height="13" rx="3.500" fill="none" stroke="currentColor"/>
            <path fill="currentColor" d="${fills[button]}"/>
            ${drag ? `<path fill="none" stroke="currentColor" d="M13.500 1v7M15.500 2.500v4"/>` : ""}</svg>`;
    };

    define("bl-statusbar", `
        :host { display: flex; align-items: center; flex: none; height: 20px; padding: 1px 9px 0 11px; background: #303030; color: #a0a0a0; }
        .zone { display: flex; align-items: center; flex: none; width: 236px; }
        .zone svg { margin-right: 11px; }
        .zone span { margin-right: 10px; white-space: nowrap; }
        .ver { margin-left: auto; }
    `, () => `
        <div class="zone">${mouse("left")}<span>Select</span>${mouse("left", true)}<span>Detach</span></div>
        <div class="zone">${mouse("middle")}</div>
        <div class="zone">${mouse("right")}<span>Lazy Connect</span>${mouse("right", true)}<span>Detach</span></div>
        <span class="ver">2.93.0</span>`);
</script>
</body>
</html>
